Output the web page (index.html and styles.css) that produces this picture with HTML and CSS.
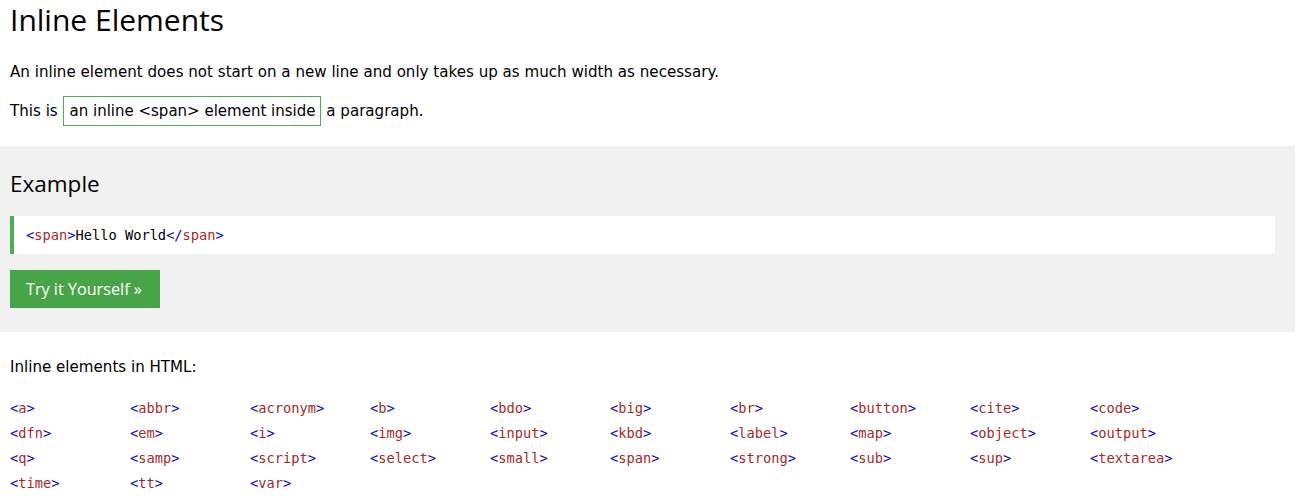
FILE: index.html
```html
<!DOCTYPE html>
<html>
<head>
<meta charset="utf-8">
<link rel="stylesheet" href="styles.css">
</head>
<body>
<div class="page">
  <div class="intro">
    <h1 class="title">Inline Elements</h1>
    <p class="text p1">An inline element does not start on a new line and only takes up as much width as necessary.</p>
    <p class="text p2">This is <span class="boxed">an inline &lt;span&gt; element inside</span> a paragraph.</p>
  </div>
  <div class="example">
    <h2 class="example-title">Example</h2>
    <div class="code"><span class="br">&lt;</span><span class="tn">span</span><span class="br">&gt;</span>Hello World<span class="br">&lt;/</span><span class="tn">span</span><span class="br">&gt;</span></div>
    <a class="btn">Try it Yourself &raquo;</a>
  </div>
  <div class="list-section">
    <p class="text list-title">Inline elements in HTML:</p>
    <div class="tags">
      <span class="tag"><span class="br">&lt;</span><span class="tn">a</span><span class="br">&gt;</span></span>
      <span class="tag"><span class="br">&lt;</span><span class="tn">abbr</span><span class="br">&gt;</span></span>
      <span class="tag"><span class="br">&lt;</span><span class="tn">acronym</span><span class="br">&gt;</span></span>
      <span class="tag"><span class="br">&lt;</span><span class="tn">b</span><span class="br">&gt;</span></span>
      <span class="tag"><span class="br">&lt;</span><span class="tn">bdo</span><span class="br">&gt;</span></span>
      <span class="tag"><span class="br">&lt;</span><span class="tn">big</span><span class="br">&gt;</span></span>
      <span class="tag"><span class="br">&lt;</span><span class="tn">br</span><span class="br">&gt;</span></span>
      <span class="tag"><span class="br">&lt;</span><span class="tn">button</span><span class="br">&gt;</span></span>
      <span class="tag"><span class="br">&lt;</span><span class="tn">cite</span><span class="br">&gt;</span></span>
      <span class="tag"><span class="br">&lt;</span><span class="tn">code</span><span class="br">&gt;</span></span>
      <span class="tag"><span class="br">&lt;</span><span class="tn">dfn</span><span class="br">&gt;</span></span>
      <span class="tag"><span class="br">&lt;</span><span class="tn">em</span><span class="br">&gt;</span></span>
      <span class="tag"><span class="br">&lt;</span><span class="tn">i</span><span class="br">&gt;</span></span>
      <span class="tag"><span class="br">&lt;</span><span class="tn">img</span><span class="br">&gt;</span></span>
      <span class="tag"><span class="br">&lt;</span><span class="tn">input</span><span class="br">&gt;</span></span>
      <span class="tag"><span class="br">&lt;</span><span class="tn">kbd</span><span class="br">&gt;</span></span>
      <span class="tag"><span class="br">&lt;</span><span class="tn">label</span><span class="br">&gt;</span></span>
      <span class="tag"><span class="br">&lt;</span><span class="tn">map</span><span class="br">&gt;</span></span>
      <span class="tag"><span class="br">&lt;</span><span class="tn">object</span><span class="br">&gt;</span></span>
      <span class="tag"><span class="br">&lt;</span><span class="tn">output</span><span class="br">&gt;</span></span>
      <span class="tag"><span class="br">&lt;</span><span class="tn">q</span><span class="br">&gt;</span></span>
      <span class="tag"><span class="br">&lt;</span><span class="tn">samp</span><span class="br">&gt;</span></span>
      <span class="tag"><span class="br">&lt;</span><span class="tn">script</span><span class="br">&gt;</span></span>
      <span class="tag"><span class="br">&lt;</span><span class="tn">select</span><span class="br">&gt;</span></span>
      <span class="tag"><span class="br">&lt;</span><span class="tn">small</span><span class="br">&gt;</span></span>
      <span class="tag"><span class="br">&lt;</span><span class="tn">span</span><span class="br">&gt;</span></span>
      <span class="tag"><span class="br">&lt;</span><span class="tn">strong</span><span class="br">&gt;</span></span>
      <span class="tag"><span class="br">&lt;</span><span class="tn">sub</span><span class="br">&gt;</span></span>
      <span class="tag"><span class="br">&lt;</span><span class="tn">sup</span><span class="br">&gt;</span></span>
      <span class="tag"><span class="br">&lt;</span><span class="tn">textarea</span><span class="br">&gt;</span></span>
      <span class="tag"><span class="br">&lt;</span><span class="tn">time</span><span class="br">&gt;</span></span>
      <span class="tag"><span class="br">&lt;</span><span class="tn">tt</span><span class="br">&gt;</span></span>
      <span class="tag"><span class="br">&lt;</span><span class="tn">var</span><span class="br">&gt;</span></span>
    </div>
  </div>
</div>
</body>
</html>
```

FILE: styles.css
```css
html, body {
  margin: 0;
  padding: 0;
  background: #ffffff;
}
.page {
  width: 1295px;
  font-family: "DejaVu Sans", Verdana, sans-serif;
  font-size: 15px;
  color: #000;
}
.intro {
  padding: 0 10px;
  overflow: hidden;
}
.title {
  margin: 0;
  font-family: "Open Sans", "Noto Sans", sans-serif;
  font-weight: 400;
  font-size: 30px;
  line-height: 40px;
}
.text {
  margin: 0;
  line-height: 24px;
  font-size: 15.1px;
}
.p1 {
  margin-top: 20px;
}
.p2 {
  margin-top: 12px;
  line-height: 30px;
  height: 30px;
}
.boxed {
  display: inline-block;
  border: 1px solid #4caf50;
  padding: 5px 5px 5px 6px;
  line-height: 18px;
  vertical-align: top;
  font-size: 15px;
}
.example {
  margin-top: 20px;
  background: #f1f1f1;
  padding: 23px 20px 24px 10px;
}
.example-title {
  margin: 0;
  font-family: "Open Sans", "Noto Sans", sans-serif;
  font-weight: 400;
  font-size: 22.5px;
  line-height: 30px;
}
.code {
  margin-top: 17px;
  background: #fff;
  border-left: 4px solid #4caf50;
  padding: 8px 12px;
  font-family: "DejaVu Sans Mono", "Liberation Mono", monospace;
  font-size: 13.7px;
  line-height: 22px;
  color: #000;
}
.br {
  color: #0000cd;
}
.tn {
  color: #a52a2a;
}
.btn {
  display: inline-block;
  margin-top: 16px;
  background: #47a447;
  color: #fff;
  font-family: "Open Sans", "Noto Sans", sans-serif;
  font-size: 16.2px;
  line-height: 22px;
  padding: 8px 16px;
  width: 118px;
}
.list-section {
  padding: 23px 10px 0 10px;
}
.tags {
  margin-top: 17px;
  display: grid;
  grid-template-columns: repeat(10, 120px);
  grid-auto-rows: 25px;
  font-family: "DejaVu Sans Mono", "Liberation Mono", monospace;
  font-size: 13.7px;
  line-height: 25px;
}
```
